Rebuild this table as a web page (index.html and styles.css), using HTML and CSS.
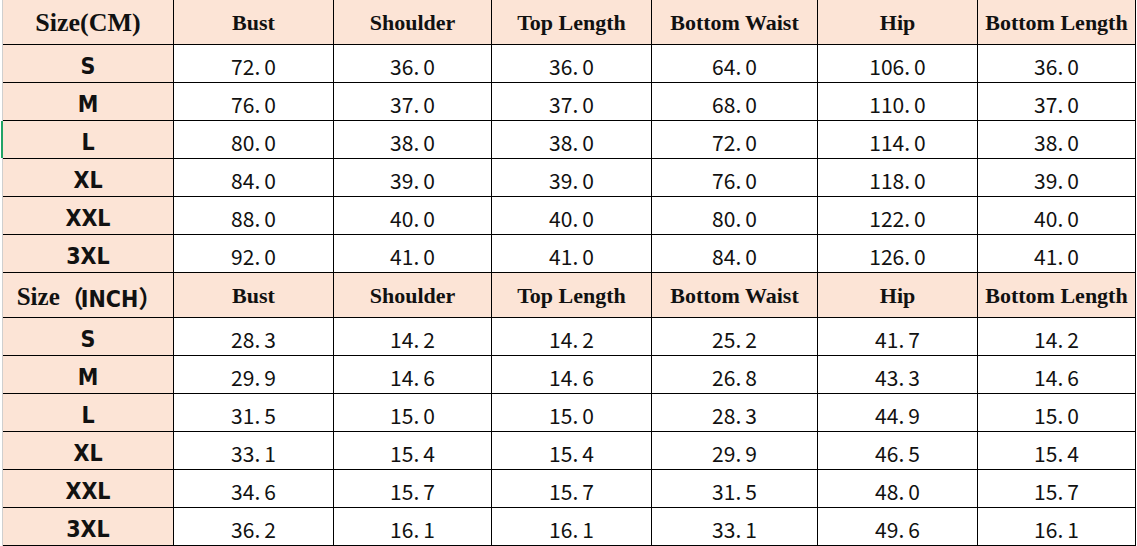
FILE: index.html
```html
<!DOCTYPE html>
<html>
<head>
<meta charset="utf-8">
<link rel="stylesheet" href="styles.css">
</head>
<body>
<div class="sheet">
  <div class="grid">
    <div class="hd first">Size(CM)</div>
    <div class="hd">Bust</div>
    <div class="hd">Shoulder</div>
    <div class="hd">Top Length</div>
    <div class="hd">Bottom Waist</div>
    <div class="hd">Hip</div>
    <div class="hd">Bottom Length</div>

    <div class="sz">S</div><div class="v">72<i class="dp">.</i>0</div><div class="v">36<i class="dp">.</i>0</div><div class="v">36<i class="dp">.</i>0</div><div class="v">64<i class="dp">.</i>0</div><div class="v">106<i class="dp">.</i>0</div><div class="v">36<i class="dp">.</i>0</div>
    <div class="sz">M</div><div class="v">76<i class="dp">.</i>0</div><div class="v">37<i class="dp">.</i>0</div><div class="v">37<i class="dp">.</i>0</div><div class="v">68<i class="dp">.</i>0</div><div class="v">110<i class="dp">.</i>0</div><div class="v">37<i class="dp">.</i>0</div>
    <div class="sz">L</div><div class="v">80<i class="dp">.</i>0</div><div class="v">38<i class="dp">.</i>0</div><div class="v">38<i class="dp">.</i>0</div><div class="v">72<i class="dp">.</i>0</div><div class="v">114<i class="dp">.</i>0</div><div class="v">38<i class="dp">.</i>0</div>
    <div class="sz">XL</div><div class="v">84<i class="dp">.</i>0</div><div class="v">39<i class="dp">.</i>0</div><div class="v">39<i class="dp">.</i>0</div><div class="v">76<i class="dp">.</i>0</div><div class="v">118<i class="dp">.</i>0</div><div class="v">39<i class="dp">.</i>0</div>
    <div class="sz">XXL</div><div class="v">88<i class="dp">.</i>0</div><div class="v">40<i class="dp">.</i>0</div><div class="v">40<i class="dp">.</i>0</div><div class="v">80<i class="dp">.</i>0</div><div class="v">122<i class="dp">.</i>0</div><div class="v">40<i class="dp">.</i>0</div>
    <div class="sz">3XL</div><div class="v">92<i class="dp">.</i>0</div><div class="v">41<i class="dp">.</i>0</div><div class="v">41<i class="dp">.</i>0</div><div class="v">84<i class="dp">.</i>0</div><div class="v">126<i class="dp">.</i>0</div><div class="v">41<i class="dp">.</i>0</div>

    <div class="hd inch">Size<span class="cjk">（<span class="inchw">INCH</span>）</span></div>
    <div class="hd">Bust</div>
    <div class="hd">Shoulder</div>
    <div class="hd">Top Length</div>
    <div class="hd">Bottom Waist</div>
    <div class="hd">Hip</div>
    <div class="hd">Bottom Length</div>

    <div class="sz">S</div><div class="v">28<i class="dp">.</i>3</div><div class="v">14<i class="dp">.</i>2</div><div class="v">14<i class="dp">.</i>2</div><div class="v">25<i class="dp">.</i>2</div><div class="v">41<i class="dp">.</i>7</div><div class="v">14<i class="dp">.</i>2</div>
    <div class="sz">M</div><div class="v">29<i class="dp">.</i>9</div><div class="v">14<i class="dp">.</i>6</div><div class="v">14<i class="dp">.</i>6</div><div class="v">26<i class="dp">.</i>8</div><div class="v">43<i class="dp">.</i>3</div><div class="v">14<i class="dp">.</i>6</div>
    <div class="sz">L</div><div class="v">31<i class="dp">.</i>5</div><div class="v">15<i class="dp">.</i>0</div><div class="v">15<i class="dp">.</i>0</div><div class="v">28<i class="dp">.</i>3</div><div class="v">44<i class="dp">.</i>9</div><div class="v">15<i class="dp">.</i>0</div>
    <div class="sz">XL</div><div class="v">33<i class="dp">.</i>1</div><div class="v">15<i class="dp">.</i>4</div><div class="v">15<i class="dp">.</i>4</div><div class="v">29<i class="dp">.</i>9</div><div class="v">46<i class="dp">.</i>5</div><div class="v">15<i class="dp">.</i>4</div>
    <div class="sz">XXL</div><div class="v">34<i class="dp">.</i>6</div><div class="v">15<i class="dp">.</i>7</div><div class="v">15<i class="dp">.</i>7</div><div class="v">31<i class="dp">.</i>5</div><div class="v">48<i class="dp">.</i>0</div><div class="v">15<i class="dp">.</i>7</div>
    <div class="sz">3XL</div><div class="v">36<i class="dp">.</i>2</div><div class="v">16<i class="dp">.</i>1</div><div class="v">16<i class="dp">.</i>1</div><div class="v">33<i class="dp">.</i>1</div><div class="v">49<i class="dp">.</i>6</div><div class="v">16<i class="dp">.</i>1</div>
  </div>
  <div class="sel"></div>
</div>
</body>
</html>
```
FILE: styles.css
```css
html, body {
  margin: 0;
  padding: 0;
  background: #ffffff;
}

.sheet {
  position: relative;
  margin-left: 2px;
  border-left: 1px solid #cfcfcf;
  width: 1133px;
  height: 546px;
}

.grid {
  display: grid;
  grid-template-columns: 170px 159px 157px 159px 165px 159px 157px;
  grid-template-rows: 44px repeat(6, 37px) 44px repeat(6, 37px);
  gap: 1px;
  background: #000000;
  border-right: 1px solid #000000;
  border-bottom: 1px solid #000000;
  width: 1132px;
}

.grid > div {
  display: flex;
  align-items: center;
  justify-content: center;
  white-space: nowrap;
  color: #111111;
}

.hd {
  background: #fce4d6;
  font-family: "Liberation Serif", serif;
  font-weight: bold;
  font-size: 22px;
  padding-top: 2px;
}

.hd.first {
  font-size: 26px;
}

.hd.inch {
  font-size: 25px;
  padding-top: 3px;
}

.cjk {
  font-family: "Noto Sans CJK SC", sans-serif;
  font-weight: bold;
  font-size: 24px;
  letter-spacing: -3px;
}

.inchw {
  font-family: "DejaVu Sans", sans-serif;
  font-stretch: condensed;
  font-weight: bold;
  font-size: 23px;
  letter-spacing: 0;
}

.sz {
  background: #fce4d6;
  font-family: "DejaVu Sans", sans-serif;
  font-stretch: condensed;
  font-weight: bold;
  font-size: 23px;
  padding-top: 5px;
}

.v {
  background: #ffffff;
  font-family: "Noto Sans CJK SC", sans-serif;
  font-size: 21px;
  padding-top: 4px;
}

.dp {
  font-style: normal;
  margin-right: 4px;
}

.sel {
  position: absolute;
  left: -2px;
  top: 121px;
  width: 2px;
  height: 37px;
  background: #21a366;
}
```
